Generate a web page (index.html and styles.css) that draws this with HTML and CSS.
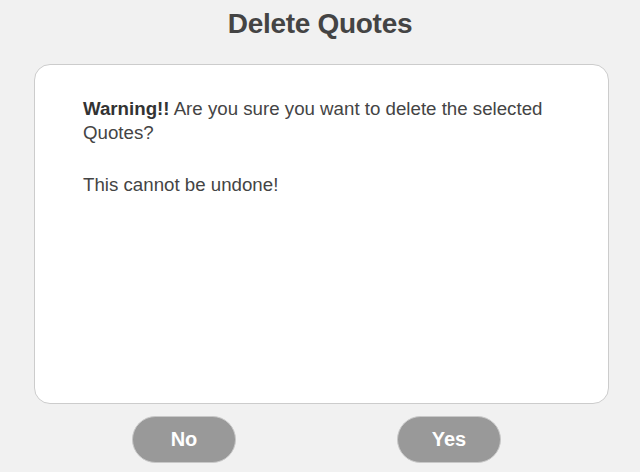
FILE: index.html
```html
<!DOCTYPE html>
<html lang="en">
<head>
    <meta charset="UTF-8">
    <meta name="viewport" content="width=device-width, initial-scale=1.0">
    <title>Delete Quotes</title>
    <link rel="stylesheet" href="styles.css">
</head>
<body>
    <div class="dialog">
        <header>
            <h1>Delete Quotes</h1>
        </header>
        <div class="card">
            <p><strong>Warning!!</strong> Are you sure you want to delete the selected Quotes?</p>
            <p>This cannot be undone!</p>
        </div>
        <div class="actions">
            <button class="btn">No</button>
            <button class="btn">Yes</button>
        </div>
    </div>
</body>
</html>
```

FILE: styles.css
```css
body {
    margin: 0;
    background: #f1f1f1;
    font-family: "Liberation Sans", Arial, sans-serif;
    color: #444;
}
header {
    text-align: center;
}
h1 {
    margin: 0;
    padding-top: 7px;
    font-size: 28px;
    line-height: 34px;
    letter-spacing: -0.3px;
    color: #444;
}
.card {
    margin: 23px 31px 0 34px;
    height: 306px;
    padding: 32px 48px 0 48px;
    background: #fff;
    border: 1px solid #ccc;
    border-radius: 16px;
}
.card p {
    margin: 0 0 28px 0;
    font-size: 18.7px;
    line-height: 24px;
}
.card strong {
    color: #333;
}
.actions {
    display: flex;
    gap: 161px;
    padding-left: 132px;
    margin-top: 12px;
}
.btn {
    width: 104px;
    height: 47px;
    border: 1px solid #c8c8c8;
    border-radius: 24px;
    background: #999;
    color: #fff;
    font-family: "Liberation Sans", Arial, sans-serif;
    font-weight: bold;
    font-size: 20px;
    cursor: pointer;
}
```
